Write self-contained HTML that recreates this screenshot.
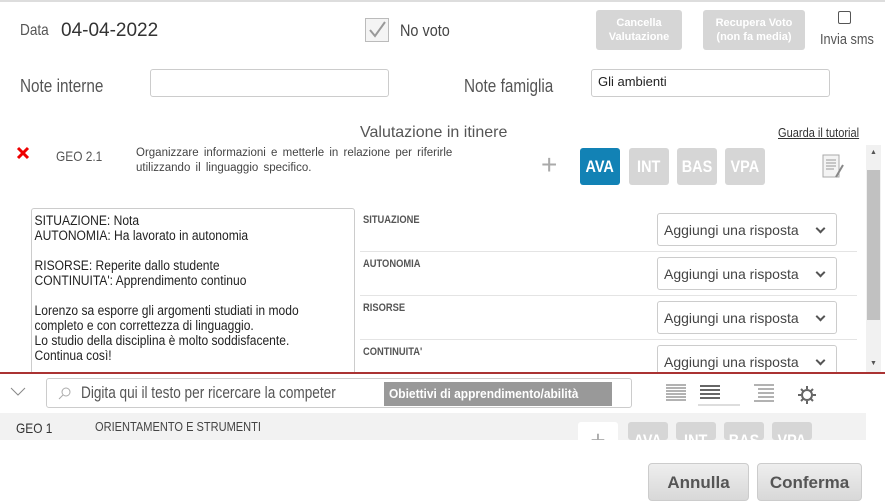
<!DOCTYPE html>
<html><head><meta charset="utf-8"><style>
*{box-sizing:border-box;margin:0;padding:0}
body{width:885px;height:501px;background:#fff;font-family:"Liberation Sans",sans-serif;color:#333;position:relative;overflow:hidden}
.a{position:absolute;white-space:nowrap}
.n{transform-origin:0 0;transform:scaleX(.85)}
.gb{position:absolute;background:#d6d6d6;color:#fff;border-radius:3px;font-weight:bold;text-align:center;font-size:11px;line-height:14px}
.ta{position:absolute;border:1px solid #ccc;border-radius:3px;background:#fff}
.tag{position:absolute;width:40px;height:37px;border-radius:3px;background:#d6d6d6;color:#fff;font-weight:bold;font-size:17px;text-align:center;line-height:37px;overflow:hidden}
.tag span{display:inline-block;transform:scaleX(.85)}
.sel{position:absolute;left:657px;width:180px;height:33px;border:1px solid #ccc;border-radius:3px;font-size:14px;color:#444;padding:8px 0 0 6px}
.sel:after{content:"";position:absolute;right:12px;top:11px;width:5px;height:5px;border-right:2px solid #555;border-bottom:2px solid #555;transform:rotate(45deg)}
.lbl{position:absolute;left:363px;font-size:11px;font-weight:bold;color:#555;transform-origin:0 0;transform:scaleX(.85)}
.hr{position:absolute;left:360px;width:497px;height:1px;background:#e4e4e4}
</style></head><body>
<div class="a" style="left:0;top:0;width:885px;height:2px;background:#ddd"></div>
<div class="a n" style="left:20px;top:22px;font-size:16px;color:#555">Data</div>
<div class="a" style="left:61px;top:20px;font-size:19px;color:#333">04-04-2022</div>
<div class="a" style="left:365px;top:18px;width:24px;height:24px;border:1px solid #bbb;background:#f4f4f4"><svg width="22" height="22"><path d="M4 11 L9 17 L19 3" stroke="#999" stroke-width="2" fill="none"/></svg></div>
<div class="a n" style="left:400px;top:21px;font-size:17px;color:#444">No voto</div>
<div class="gb" style="left:596px;top:10px;width:86px;height:40px;padding-top:6px">Cancella<br>Valutazione</div>
<div class="gb" style="left:703px;top:10px;width:102px;height:40px;padding-top:6px">Recupera Voto<br>(non fa media)</div>
<div class="a" style="left:838px;top:11px;width:13px;height:13px;border:1px solid #555;border-radius:2px"></div>
<div class="a n" style="left:820px;top:31px;font-size:15px;color:#555">Invia sms</div>
<div class="a n" style="left:20px;top:76px;font-size:18px;color:#555">Note interne</div>
<div class="ta" style="left:150px;top:69px;width:239px;height:28px"></div>
<div class="a n" style="left:464px;top:76px;font-size:18px;color:#555">Note famiglia</div>
<div class="ta" style="left:591px;top:69px;width:239px;height:28px;padding:4px 6px;font-size:13px;color:#222">Gli ambienti</div>
<div class="a" style="left:360px;top:124px;font-size:16px;color:#555">Valutazione in itinere</div>
<div class="a n" style="left:778px;top:125px;font-size:13px;color:#333;text-decoration:underline">Guarda il tutorial</div>
<svg class="a" style="left:16px;top:146px" width="14" height="14"><path d="M2 2L12 12M12 2L2 12" stroke="#e00" stroke-width="3"/></svg>
<div class="a n" style="left:56px;top:148px;font-size:14px;color:#555">GEO 2.1</div>
<div class="a" style="left:136px;top:146px;width:360px;font-size:11.5px;color:#444;white-space:normal;text-align:justify;text-align-last:left;line-height:15px;word-spacing:2px">Organizzare informazioni e metterle in relazione per riferirle<br>utilizzando il linguaggio specifico.</div>
<div class="a" style="left:541px;top:148px;font-size:28px;color:#aaa;line-height:34px">+</div>
<div class="tag" style="left:580px;top:148px;background:#1282b5"><span>AVA</span></div>
<div class="tag" style="left:629px;top:148px"><span>INT</span></div>
<div class="tag" style="left:677px;top:148px"><span>BAS</span></div>
<div class="tag" style="left:725px;top:148px"><span>VPA</span></div>
<svg class="a" style="left:820px;top:153px" width="26" height="28"><rect x="3" y="2" width="16" height="22" fill="#f4f4f4" stroke="#aaa"/><path d="M6 7h10M6 10h10M6 13h10M6 16h8" stroke="#999"/><path d="M16 24 L23 12" stroke="#888" stroke-width="2"/></svg>
<div class="a" style="left:866px;top:145px;width:15px;height:227px;background:#f1f1f1"></div>
<div class="a" style="left:867px;top:170px;width:13px;height:150px;background:#c1c1c1"></div>
<div class="a" style="left:870px;top:149px;font-size:7px;color:#555">▲</div>
<div class="a" style="left:870px;top:360px;font-size:7px;color:#555">▼</div>
<div class="ta" style="left:31px;top:208px;width:324px;height:170px;overflow:hidden"><div style="padding:5px 3px;font-size:14.2px;line-height:15px;color:#222;white-space:pre;transform-origin:0 0;transform:scaleX(.85);width:380px">SITUAZIONE: Nota
AUTONOMIA: Ha lavorato in autonomia

RISORSE: Reperite dallo studente
CONTINUITA': Apprendimento continuo

Lorenzo sa esporre gli argomenti studiati in modo
completo e con correttezza di linguaggio.
Lo studio della disciplina è molto soddisfacente.
Continua così!</div></div>
<div class="lbl" style="top:214px">SITUAZIONE</div>
<div class="lbl" style="top:258px">AUTONOMIA</div>
<div class="lbl" style="top:302px">RISORSE</div>
<div class="lbl" style="top:346px">CONTINUITA'</div>
<div class="hr" style="top:251px"></div><div class="hr" style="top:295px"></div><div class="hr" style="top:339px"></div>
<div class="sel" style="top:213px">Aggiungi una risposta</div>
<div class="sel" style="top:257px">Aggiungi una risposta</div>
<div class="sel" style="top:301px">Aggiungi una risposta</div>
<div class="sel" style="top:345px">Aggiungi una risposta</div>
<div class="a" style="left:0;top:372px;width:885px;height:129px;background:#fff"></div>
<div class="a" style="left:0;top:372px;width:885px;height:2px;background:#a33"></div>
<svg class="a" style="left:10px;top:386px" width="18" height="12"><path d="M1 2L8 9L15 2" stroke="#888" fill="none"/></svg>
<div class="ta" style="left:46px;top:378px;width:586px;height:30px"></div>
<svg class="a" style="left:58px;top:386px" width="14" height="14"><circle cx="8" cy="6" r="4" fill="none" stroke="#aaa"/><path d="M5 9 L1 13" stroke="#aaa"/></svg>
<div class="a n" style="left:81px;top:383px;font-size:17px;color:#555;transform:scaleX(.8)">Digita qui il testo per ricercare la competer</div>
<div class="a" style="left:384px;top:382px;width:228px;height:24px;background:#999;color:#fff;font-size:13px;font-weight:bold;padding:4px 5px"><span style="display:inline-block;transform-origin:0 0;transform:scaleX(.92)">Obiettivi di apprendimento/abilità</span></div>
<svg class="a" style="left:664px;top:382px" width="160" height="26"><g stroke="#666"><path d="M2 3h20M2 6h20M2 9h20M2 12h20M2 15h20M2 18h20"/><path d="M36 4h20M36 8h20M36 12h20M36 16h20" stroke-width="2"/><path d="M34 23h42" stroke="#bbb"/><path d="M90 3h20M94 7h16M94 11h16M94 15h16M90 19h20"/></g><g transform="translate(143,13)" fill="none" stroke="#666" stroke-width="2"><circle r="5"/><path d="M0-9v3M0 6v3M-9 0h3M6 0h3M-6-6l2 2M4 4l2 2M-6 6l2-2M4-4l2-2"/></g></svg>
<div class="a" style="left:0;top:413px;width:866px;height:27px;background:#f2f2f2"></div>
<div class="a n" style="left:16px;top:420px;font-size:14px;color:#333">GEO 1</div>
<div class="a n" style="left:95px;top:419px;font-size:13px;color:#444">ORIENTAMENTO E STRUMENTI</div>
<div class="a" style="left:578px;top:422px;width:40px;height:18px;background:#fff;border-radius:3px 3px 0 0;color:#aaa;font-size:26px;text-align:center;line-height:36px;overflow:hidden">+</div>
<div class="tag" style="left:628px;top:422px;height:18px;line-height:37px"><span>AVA</span></div>
<div class="tag" style="left:676px;top:422px;height:18px;line-height:37px"><span>INT</span></div>
<div class="tag" style="left:724px;top:422px;height:18px;line-height:37px"><span>BAS</span></div>
<div class="tag" style="left:772px;top:422px;height:18px;line-height:37px"><span>VPA</span></div>
<div class="a" style="left:648px;top:463px;width:101px;height:38px;border:1px solid #ccc;border-radius:4px;background:linear-gradient(#eee,#d8d8d8);font-size:17px;font-weight:bold;color:#555;text-align:center;line-height:38px">Annulla</div>
<div class="a" style="left:757px;top:463px;width:105px;height:38px;border:1px solid #ccc;border-radius:4px;background:linear-gradient(#eee,#d8d8d8);font-size:17px;font-weight:bold;color:#555;text-align:center;line-height:38px">Conferma</div>
</body></html>
